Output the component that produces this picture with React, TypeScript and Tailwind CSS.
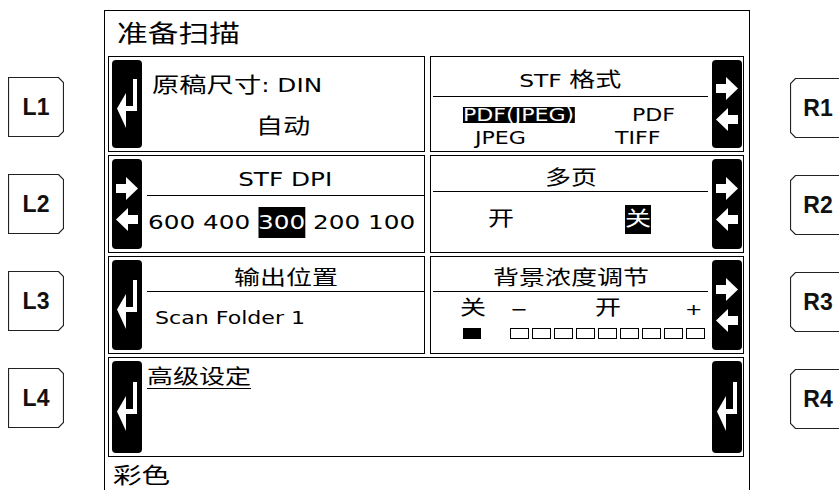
import type { ReactNode } from 'react';

const Sx = ({ children, className = '' }: { children: ReactNode; className?: string }) => (
    <span className={`inline-block scale-x-[1.3] whitespace-nowrap ${className}`}>{children}</span>
);

const EnterIcon = () => (
    <svg width="30" height="50" viewBox="0 0 30 50" fill="white">
        <rect x="21" y="0" width="4" height="32" />
        <rect x="13" y="27" width="12" height="5" />
        <polygon points="5,29.5 14,14 14,49" />
    </svg>
);

const SwapIcon = () => (
    <svg width="30" height="60" viewBox="0 0 30 60" fill="white">
        <rect x="4" y="10" width="11" height="9" />
        <polygon points="14,3 26,14.5 14,26" />
        <polygon points="4,45.5 16,34 16,57" />
        <rect x="15" y="41" width="11" height="9" />
    </svg>
);

const Btn = ({ children, side }: { children: ReactNode; side: 'left' | 'right' }) => (
    <div
        className={`w-[30px] shrink-0 my-[3px] bg-black rounded-[4px] flex items-center justify-center ${side === 'left' ? 'ml-[3px]' : 'mr-[1px]'}`}
    >
        {children}
    </div>
);

const Key = ({ label, side }: { label: string; side: 'left' | 'right' }) => (
    <div className="relative w-[56px] h-[60px] shrink-0 flex items-center justify-center font-['Liberation_Sans',sans-serif] font-bold text-[23px] text-[#111]">
        <svg className="absolute inset-0" width="56" height="60" viewBox="0 0 56 60" fill="none" stroke="#222" strokeWidth="1.2">
            {side === 'left' ? (
                <polygon points="0.5,0.5 50.5,0.5 55.5,5.5 55.5,54.5 50.5,59.5 0.5,59.5" />
            ) : (
                <polygon points="5.5,0.5 55.5,0.5 55.5,59.5 5.5,59.5 0.5,54.5 0.5,5.5" />
            )}
        </svg>
        <span className="relative">{label}</span>
    </div>
);

export default function App() {
    return (
        <div className="w-[839px] h-[490px] overflow-hidden bg-white text-black flex font-['DejaVu_Sans','Noto_Sans_CJK_SC',sans-serif]">
            {/* left soft keys */}
            <div className="w-[104px] shrink-0 flex flex-col pt-[77px] gap-[37px] pl-[8px]">
                {['L1', 'L2', 'L3', 'L4'].map((k) => (
                    <Key key={k} label={k} side="left" />
                ))}
            </div>

            {/* screen */}
            <div className="w-[646px] shrink-0 mt-[10px] h-[500px] border border-black pl-[3px] pr-[5px] flex flex-col">
                <div className="h-[45px] flex items-center pl-[9px]">
                    <Sx className="origin-left text-[24px] leading-[28px] scale-x-[1.28]">准备扫描</Sx>
                </div>

                <div className="grid grid-cols-[317px_314px] grid-rows-[96px_98px_98px_100px] gap-x-[5px] gap-y-[3px]">
                    {/* 原稿尺寸 */}
                    <div className="border border-black flex">
                        <Btn side="left"><EnterIcon /></Btn>
                        <div className="flex-1 flex flex-col">
                            <div className="mt-[17px] h-[22px] leading-[22px] pl-[10px]">
                                <Sx className="origin-left text-[21px]">
                                    原稿尺寸<span className="text-[19px]">: DIN</span>
                                </Sx>
                            </div>
                            <div className="mt-[19px] h-[22px] leading-[22px] text-center">
                                <Sx className="text-[21px]">自动</Sx>
                            </div>
                        </div>
                    </div>

                    {/* STF 格式 */}
                    <div className="border border-black flex">
                        <div className="flex-1 flex flex-col">
                            <div className="h-[40px] ml-[2px] mr-[4px] border-b border-black flex items-end justify-center pb-[3px]">
                                <Sx className="text-[18px] leading-[24px]">
                                    STF <span className="text-[20px]">格式</span>
                                </Sx>
                            </div>
                            <div className="mt-[10px] h-[16px] leading-[16px] flex pl-[32px] text-[17px]">
                                <div className="w-[169px]">
                                    <Sx className="origin-left bg-black text-white">PDF(JPEG)</Sx>
                                </div>
                                <Sx className="origin-left">PDF</Sx>
                            </div>
                            <div className="mt-[5px] h-[20px] leading-[20px] flex pl-[44px] text-[17px]">
                                <div className="w-[140px]">
                                    <Sx className="origin-left">JPEG</Sx>
                                </div>
                                <Sx className="origin-left">TIFF</Sx>
                            </div>
                        </div>
                        <Btn side="right"><SwapIcon /></Btn>
                    </div>

                    {/* STF DPI */}
                    <div className="border border-black flex">
                        <Btn side="left"><SwapIcon /></Btn>
                        <div className="flex-1 flex flex-col">
                            <div className="h-[40px] ml-[5px] border-b border-black flex items-end justify-center pb-[5px]">
                                <Sx className="text-[19px] leading-[22px]">STF DPI</Sx>
                            </div>
                            <div className="mt-[11px] h-[31px] leading-[31px] pl-[6px]">
                                <Sx className="origin-left text-[19px]">
                                    600 400 <span className="inline-block bg-black text-white">300</span> 200 100
                                </Sx>
                            </div>
                        </div>
                    </div>

                    {/* 多页 */}
                    <div className="border border-black flex">
                        <div className="flex-1 flex flex-col">
                            <div className="h-[36px] ml-[2px] mr-[4px] border-b border-black flex items-end justify-center pb-[1px]">
                                <Sx className="text-[20px] leading-[24px]">多页</Sx>
                            </div>
                            <div className="mt-[13px] h-[29px] leading-[29px] flex pl-[57px] text-[20px]">
                                <div className="w-[137px]">
                                    <Sx className="origin-left">开</Sx>
                                </div>
                                <Sx className="origin-left bg-black text-white">关</Sx>
                            </div>
                        </div>
                        <Btn side="right"><SwapIcon /></Btn>
                    </div>

                    {/* 输出位置 */}
                    <div className="border border-black flex">
                        <Btn side="left"><EnterIcon /></Btn>
                        <div className="flex-1 flex flex-col">
                            <div className="h-[35px] ml-[5px] border-b border-black flex items-end justify-center pb-[1px]">
                                <Sx className="text-[20px] leading-[24px]">输出位置</Sx>
                            </div>
                            <div className="mt-[16px] h-[20px] leading-[20px] pl-[13px]">
                                <Sx className="origin-left text-[17px]">Scan Folder 1</Sx>
                            </div>
                        </div>
                    </div>

                    {/* 背景浓度调节 */}
                    <div className="border border-black flex">
                        <div className="flex-1 flex flex-col">
                            <div className="h-[35px] ml-[2px] mr-[4px] border-b border-black flex items-end justify-center pb-[1px]">
                                <Sx className="text-[20px] leading-[24px]">背景浓度调节</Sx>
                            </div>
                            <div className="mt-[5px] h-[22px] leading-[22px] flex items-baseline pl-[29px] text-[20px]">
                                <div className="w-[50px]"><Sx className="origin-left">关</Sx></div>
                                <div className="w-[85px]"><Sx className="origin-left text-[16px]">−</Sx></div>
                                <div className="w-[90px]"><Sx className="origin-left">开</Sx></div>
                                <Sx className="origin-left text-[16px]">+</Sx>
                            </div>
                            <div className="mt-[9px] h-[11px] flex pl-[32px]">
                                <div className="w-[18px] h-[11px] bg-black" />
                                <div className="ml-[29px] flex gap-[3px]">
                                    {Array.from({ length: 9 }).map((_, i) => (
                                        <div key={i} className="w-[19px] h-[11px] border border-black" />
                                    ))}
                                </div>
                            </div>
                        </div>
                        <Btn side="right"><SwapIcon /></Btn>
                    </div>

                    {/* 高级设定 */}
                    <div className="col-span-2 border border-black flex">
                        <Btn side="left"><EnterIcon /></Btn>
                        <div className="flex-1 pl-[5px] pt-[8px]">
                            <Sx className="origin-left text-[20px] leading-[22px] border-b border-black">高级设定</Sx>
                        </div>
                        <Btn side="right"><EnterIcon /></Btn>
                    </div>
                </div>

                <div className="mt-[4px] h-[30px] leading-[30px] pl-[5px]">
                    <Sx className="origin-left text-[22px]">彩色</Sx>
                </div>
            </div>

            {/* right soft keys */}
            <div className="flex-1 flex flex-col pt-[78px] gap-[37px] pl-[40px]">
                {['R1', 'R2', 'R3', 'R4'].map((k) => (
                    <Key key={k} label={k} side="right" />
                ))}
            </div>
        </div>
    );
}
